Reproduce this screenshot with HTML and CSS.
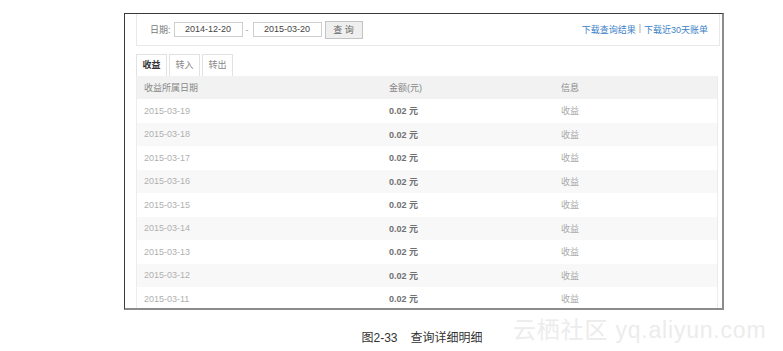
FILE: index.html
```html
<!DOCTYPE html>
<html lang="zh-CN">
<head>
    <meta charset="UTF-8">
    <meta name="viewport" content="width=device-width, initial-scale=1.0">
    <title>查询详细明细</title>
    <link rel="stylesheet" href="styles.css">
</head>
<body>
    <div class="page">
        <div class="shot">
            <div class="filter">
                <div class="query">
                    <span class="label">日期:</span>
                    <span class="field">2014-12-20</span>
                    <span class="dash">-</span>
                    <span class="field">2015-03-20</span>
                    <span class="btn">查 询</span>
                </div>
                <div class="links">
                    <a href="#">下载查询结果</a>
                    <span class="sep">|</span>
                    <a href="#">下载近30天账单</a>
                </div>
            </div>

            <div class="tabs">
                <span class="tab active">收益</span>
                <span class="tab">转入</span>
                <span class="tab">转出</span>
            </div>

            <div class="table">
                <div class="row head">
                    <span>收益所属日期</span>
                    <span>金额(元)</span>
                    <span>信息</span>
                </div>
                <div class="row"><span class="date">2015-03-19</span><span class="money">0.02 元</span><span class="info">收益</span></div>
                <div class="row"><span class="date">2015-03-18</span><span class="money">0.02 元</span><span class="info">收益</span></div>
                <div class="row"><span class="date">2015-03-17</span><span class="money">0.02 元</span><span class="info">收益</span></div>
                <div class="row"><span class="date">2015-03-16</span><span class="money">0.02 元</span><span class="info">收益</span></div>
                <div class="row"><span class="date">2015-03-15</span><span class="money">0.02 元</span><span class="info">收益</span></div>
                <div class="row"><span class="date">2015-03-14</span><span class="money">0.02 元</span><span class="info">收益</span></div>
                <div class="row"><span class="date">2015-03-13</span><span class="money">0.02 元</span><span class="info">收益</span></div>
                <div class="row"><span class="date">2015-03-12</span><span class="money">0.02 元</span><span class="info">收益</span></div>
                <div class="row"><span class="date">2015-03-11</span><span class="money">0.02 元</span><span class="info">收益</span></div>
            </div>
        </div>

        <div class="caption">
            <span>图2-33</span>
            <span>查询详细明细</span>
        </div>

        <div class="watermark">云栖社区 yq.aliyun.com</div>
    </div>
</body>
</html>
```

FILE: styles.css
```css
body {
    margin: 0;
    background: #fff;
    font-family: "Liberation Sans", "Noto Sans CJK SC", sans-serif;
}
.page {
    position: relative;
    width: 783px;
    height: 351px;
    overflow: hidden;
}

/* 截图外框 */
.shot {
    box-sizing: border-box;
    width: 600px;
    height: 297px;
    margin: 13px 0 0 124px;
    padding: 0 2px 0 11px;
    border: 1px solid #3a3a3a;
    border-right: 2px solid #8c8c8c;
    border-bottom: 2px solid #8c8c8c;
    overflow: hidden;
}

/* 查询条件 */
.filter {
    display: flex;
    justify-content: space-between;
    align-items: center;
    height: 31px;
    margin-top: -1px;
    padding: 0 11px 0 13px;
    border: 1px solid #e8e8e8;
    font-size: 9px;
}
.query {
    display: flex;
    align-items: center;
}
.label {
    color: #777;
    margin-right: 3px;
}
.field {
    box-sizing: border-box;
    width: 69px;
    height: 15px;
    line-height: 13px;
    border: 1px solid #cfcfcf;
    text-align: center;
    color: #444;
}
.dash {
    color: #999;
    margin: 0 4px 0 3px;
}
.btn {
    box-sizing: border-box;
    width: 38px;
    height: 18px;
    line-height: 16px;
    margin-left: 3px;
    border: 1px solid #c4c4c4;
    background: #efefef;
    text-align: center;
    color: #666;
}
.links {
    display: flex;
    gap: 3px;
}
.links a {
    color: #3c7fc8;
    text-decoration: none;
}
.sep {
    color: #999;
}

/* 标签页 */
.tabs {
    display: flex;
    gap: 2px;
    margin-top: 8px;
    height: 22px;
}
.tab {
    box-sizing: border-box;
    width: 31px;
    border: 1px solid #e2e2e2;
    border-bottom: none;
    text-align: center;
    line-height: 21px;
    font-size: 9px;
    color: #888;
}
.tab.active {
    color: #333;
    font-weight: bold;
    background: #fff;
}

/* 明细表格 */
.table {
    border: 1px solid #ececec;
    border-top: none;
    margin-right: 2px;
}
.row {
    display: grid;
    grid-template-columns: 245px 172px 1fr;
    height: 23.5px;
    align-items: center;
    font-size: 9px;
}
.row span {
    padding-left: 7px;
}
.row:nth-child(odd) {
    background: #f8f8f8;
}
.row.head {
    height: 23px;
    background: #f2f2f2;
    color: #888;
}
.date {
    color: #b0b0b0;
}
.money {
    color: #707070;
    font-weight: bold;
}
.info {
    color: #aaa;
}

/* 图注 */
.caption {
    width: 600px;
    margin-left: 122px;
    margin-top: 18px;
    display: flex;
    justify-content: center;
    gap: 13px;
    font-size: 12px;
    color: #333;
}
.watermark {
    position: absolute;
    left: 513px;
    top: 311px;
    font-size: 23px;
    letter-spacing: 0.8px;
    color: #ececec;
    white-space: nowrap;
}
```
